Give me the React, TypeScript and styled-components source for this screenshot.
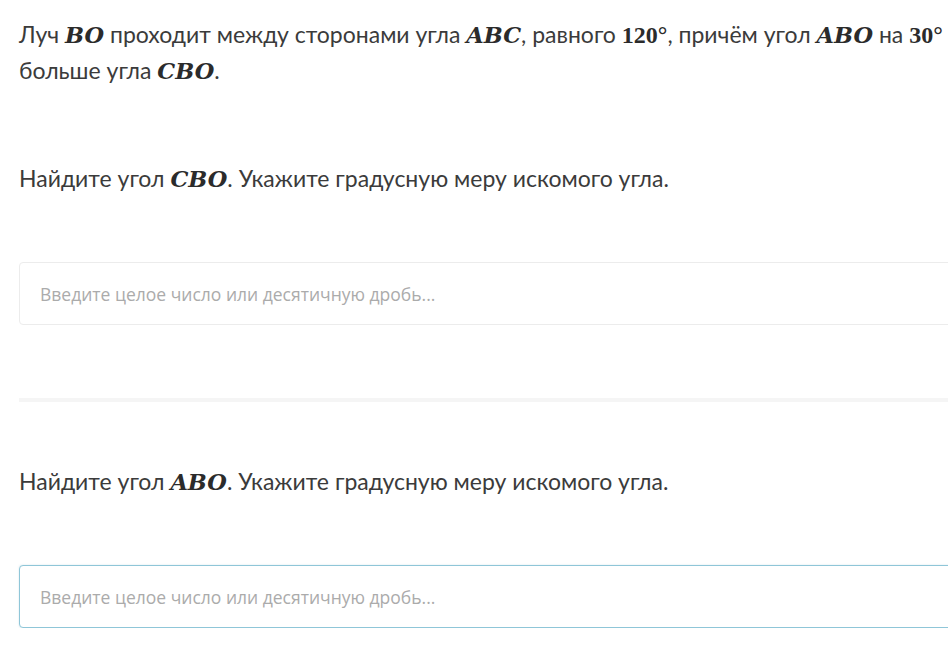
import { FC } from "react";
import styled, { createGlobalStyle } from "styled-components";

const Global = createGlobalStyle`
  html, body {
    margin: 0;
    padding: 0;
    background: #ffffff;
    overflow: hidden;
  }
  body {
    font-family: Lato, "Noto Sans", sans-serif;
    color: #3b3b3b;
  }
`;

const M: FC<{ children: React.ReactNode }> = ({ children }) => <S.Math>{children}</S.Math>;
const N: FC<{ children: React.ReactNode }> = ({ children }) => <S.Num>{children}</S.Num>;

const Question: FC<{ angle: string; focused?: boolean }> = ({ angle, focused }) => (
  <S.Block>
    <S.Text>
      Найдите угол <M>{angle}</M>. Укажите градусную меру искомого угла.
    </S.Text>
    <S.Input focused={!!focused} type="text" placeholder="Введите целое число или десятичную дробь..." />
  </S.Block>
);

export default function App() {
  return (
    <>
      <Global />
      <S.Page>
        <S.Lead>
          Луч <M>BO</M> проходит между сторонами угла <M>ABC</M>, равного <N>120°</N>, причём угол{" "}
          <M>ABO</M> на <N>30°</N> больше угла <M>CBO</M>.
        </S.Lead>
        <Question angle="CBO" />
        <S.Divider />
        <Question angle="ABO" focused />
      </S.Page>
    </>
  );
}

const S = {
  Page: styled.div`
    width: 1000px;
    padding: 17px 0 0 19px;
    box-sizing: border-box;
  `,
  Lead: styled.p`
    margin: 0 0 10px;
    width: 929px;
    font-size: 23px;
    line-height: 35px;
  `,
  Block: styled.div`
    display: flex;
    flex-direction: column;
  `,
  Text: styled.p`
    margin: 62px 0 0;
    font-size: 23px;
    line-height: 35px;
  `,
  Math: styled.span`
    font-family: "DejaVu Serif", "Liberation Serif", serif;
    font-weight: 700;
    font-style: italic;
    font-size: 22.5px;
    color: #2b2b2b;
  `,
  Num: styled.span`
    font-family: "Liberation Serif", "DejaVu Serif", serif;
    font-weight: 700;
    font-size: 24px;
    color: #2b2b2b;
  `,
  Input: styled.input<{ focused: boolean }>`
    margin-top: 65px;
    height: 63px;
    box-sizing: border-box;
    width: 100%;
    padding: 0 20px;
    border: 1px solid ${p => (p.focused ? "#8fc6d8" : "#ececec")};
    box-shadow: ${p => (p.focused ? "0 0 2px rgba(120, 180, 200, 0.35)" : "none")};
    border-radius: 4px;
    background: #fff;
    outline: none;
    font-family: "Open Sans", sans-serif;
    font-size: 17.5px;
    color: #333;
    &::placeholder {
      color: #ababab;
    }
  `,
  Divider: styled.div`
    margin-top: 73px;
    height: 4px;
    background: #f5f5f5;
  `
};
